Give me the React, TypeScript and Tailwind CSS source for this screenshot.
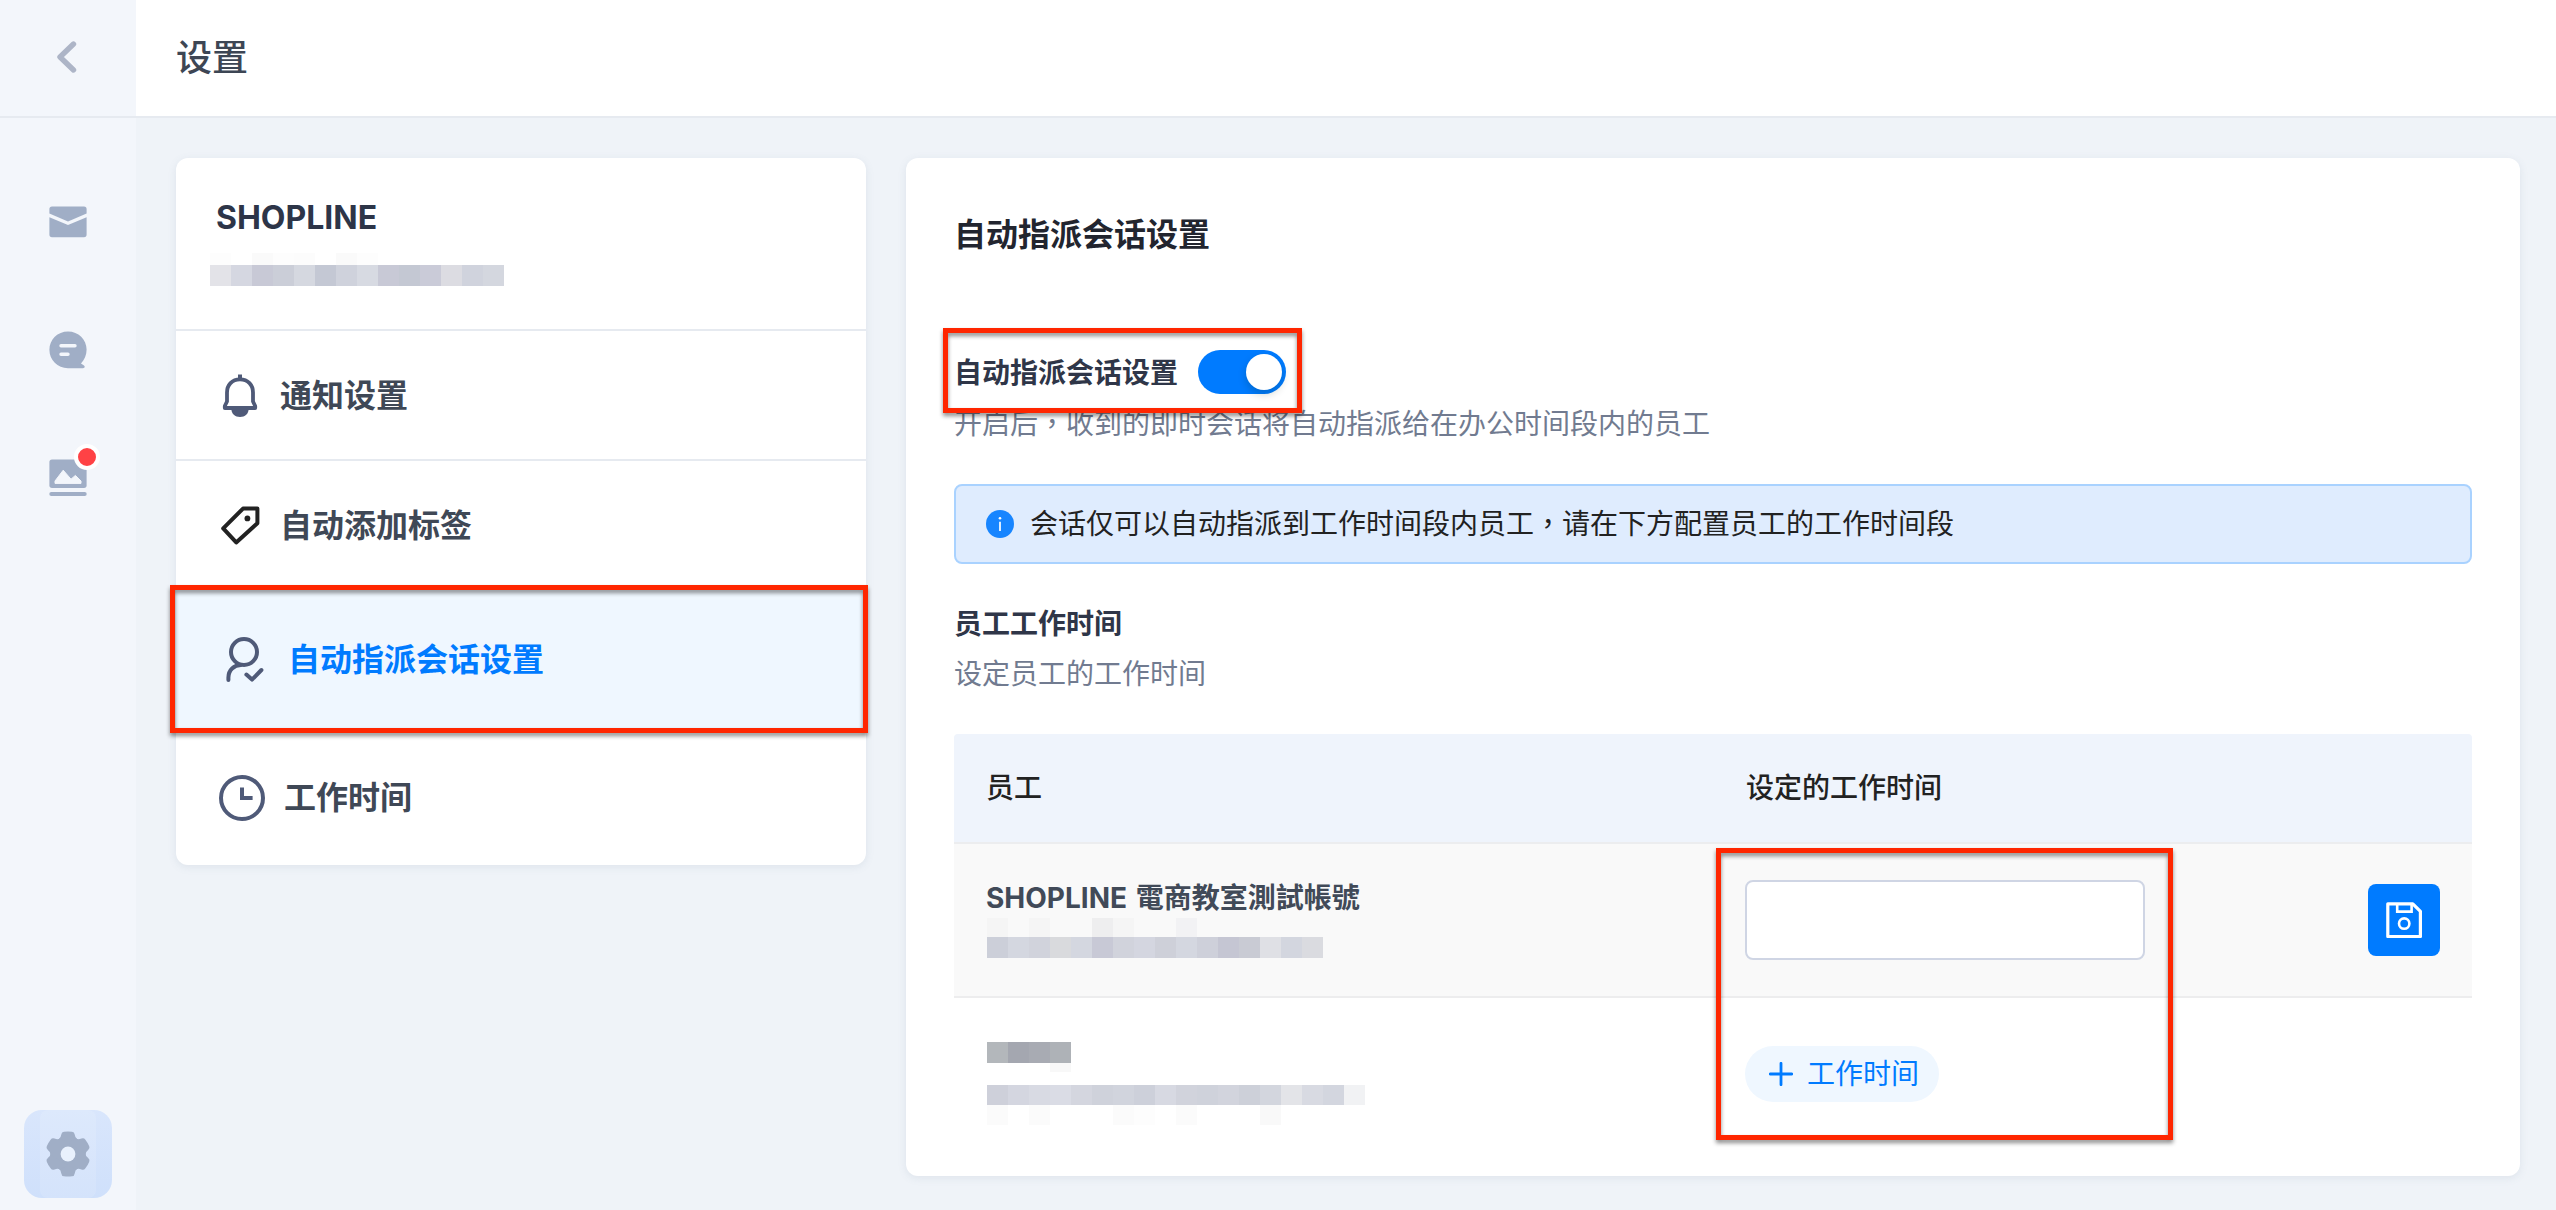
import type { ReactNode } from 'react';
import clsx from 'clsx';

interface MenuItem {
  key: string;
  label: string;
  icon: ReactNode;
  className: string;
}

// モザイク1行分のセル（空文字は透明）
interface MosaicRow {
  height: string;
  cells: string[];
}

const BackIcon = () => (
  <svg className="w-[20px] h-[32px]" viewBox="0 0 20 32" fill="none">
    <path d="M16.5 3L3 16L16.5 29" stroke="#adb5c7" strokeWidth="5.4" strokeLinecap="round" strokeLinejoin="round" />
  </svg>
);

const MailIcon = () => (
  <svg className="w-[38px] h-[32px]" viewBox="0 0 38 32" fill="#a0aec6">
    <path d="M3 0.5H35Q37.6 0.5 37.6 3V7.4L19 15.4L0.4 7.4V3Q0.4 0.5 3 0.5Z" />
    <path d="M0.4 11.2L19 19L37.6 11.2V28.5Q37.6 31.3 35 31.3H3Q0.4 31.3 0.4 28.5Z" />
  </svg>
);

const ChatIcon = () => (
  <svg className="w-[38px] h-[38px]" viewBox="0 0 38 38">
    <path
      d="M19 0.5C29.4 0.5 37.6 8.4 37.6 18.6C37.6 24.2 35.4 29 32 32.4L35 34.6C36.4 35.8 35.8 37.2 34 37.2H19C8.6 37.2 0.4 29 0.4 18.8C0.4 8.6 8.6 0.5 19 0.5Z"
      fill="#a0aec6"
    />
    <path d="M12 14.8H26M12 23.3H19" stroke="#f3f6fb" strokeWidth="3.4" strokeLinecap="round" />
  </svg>
);

const GalleryIcon = () => (
  <svg className="w-[38px] h-[38px]" viewBox="0 0 38 38">
    <rect x="0.4" y="0.5" width="37.2" height="28.4" rx="2.6" fill="#a0aec6" />
    <path d="M6 22L14.2 11.2L22 20.2L26.4 16.4L32 22V24.4H6Z" fill="#f3f6fb" stroke="#f3f6fb" strokeWidth="1" strokeLinejoin="round" />
    <path d="M2.4 35H35.6" stroke="#a0aec6" strokeWidth="4.2" strokeLinecap="round" />
  </svg>
);

const GearIcon = () => (
  <svg className="w-[46px] h-[46px]" viewBox="0 0 46 46">
    <g fill="#a0aec6">
      <circle cx="23" cy="23" r="17.2" />
      {[0, 60, 120].map((deg) => (
        <path
          key={deg}
          transform={`rotate(${deg} 23 23)`}
          d="M13.5 8.5Q16 7 16.3 3.6Q16.6 1 19 0.8Q23 0.2 27 0.8Q29.4 1 29.7 3.6Q30 7 32.5 8.5V37.5Q30 39 29.7 42.4Q29.4 45 27 45.2Q23 45.8 19 45.2Q16.6 45 16.3 42.4Q16 39 13.5 37.5Z"
        />
      ))}
    </g>
    <circle cx="23" cy="23" r="7.4" fill="#e9f1fd" />
  </svg>
);

const BellIcon = () => (
  <svg className="w-[36px] h-[44px]" viewBox="0 0 36 44" fill="none">
    <path d="M18 0.5V5" stroke="#4f5a78" strokeWidth="4" />
    <path
      d="M18 5.4C10 5.4 5 11 5 18.5V27.5L2.8 32V34H33.2V32L31 27.5V18.5C31 11 26 5.4 18 5.4Z"
      stroke="#4f5a78"
      strokeWidth="3.8"
      strokeLinejoin="round"
    />
    <path d="M9.4 35H26.6C26.6 39.8 23 43 18 43C13 43 9.4 39.8 9.4 35Z" fill="#4f5a78" />
  </svg>
);

const TagIcon = () => (
  <svg className="w-[40px] h-[40px]" viewBox="0 0 40 40" fill="none">
    <path d="M23 2.6H37.4V17.2L16.2 36.4L3.2 22.4Z" stroke="#222" strokeWidth="4" strokeLinejoin="round" />
    <circle cx="27.4" cy="12.4" r="2.9" fill="#222" />
  </svg>
);

const AgentIcon = () => (
  <svg className="w-[38px] h-[46px]" viewBox="0 0 38 46" fill="none" stroke="#4f5a78" strokeWidth="4" strokeLinecap="round" strokeLinejoin="round">
    <circle cx="18" cy="15" r="13" />
    <path d="M2.4 43V40.5C2.4 33 8 28 15 28" />
    <path d="M20.4 37.6L26 42.6L35.4 33" />
  </svg>
);

const ClockIcon = () => (
  <svg className="w-[46px] h-[46px]" viewBox="0 0 46 46" fill="none" stroke="#4f5a78">
    <circle cx="23" cy="23" r="21" strokeWidth="4" />
    <path d="M23 12.4V23H33.6" strokeWidth="4" />
  </svg>
);

const InfoIcon = () => (
  <svg className="w-[28px] h-[28px]" viewBox="0 0 28 28">
    <circle cx="14" cy="14" r="14" fill="#1785ff" />
    <circle cx="14" cy="8.2" r="1.3" fill="#fff" />
    <path d="M14 11.8V21" stroke="#fff" strokeWidth="1.7" />
  </svg>
);

const PlusIcon = () => (
  <svg className="w-[24px] h-[24px]" viewBox="0 0 24 24">
    <path d="M12 1.3V22.7M1.3 12H22.7" stroke="#007bff" strokeWidth="2.8" strokeLinecap="round" />
  </svg>
);

const SaveIcon = () => (
  <svg className="w-[36px] h-[36px]" viewBox="0 0 36 36" fill="none" stroke="#fff">
    <path d="M1.8 1.8H26.8L34.4 9.4V34.6H1.8Z" strokeWidth="3.2" strokeLinejoin="round" />
    <path d="M11.2 2V9.6H25.6V2" strokeWidth="2.6" />
    <circle cx="18.2" cy="21.6" r="5.2" strokeWidth="2.6" />
  </svg>
);

function Mosaic({ rows }: { rows: MosaicRow[] }) {
  return (
    <div className="flex flex-col">
      {rows.map((row, i) => (
        <div key={i} className={clsx('flex', row.height)}>
          {row.cells.map((color, j) => (
            <span key={j} className="w-[21px] h-full" style={{ backgroundColor: color || undefined }} />
          ))}
        </div>
      ))}
    </div>
  );
}

// 強調用の赤枠
function Highlight({ className }: { className: string }) {
  return (
    <div
      className={clsx(
        'absolute z-10 border-[5px] border-[#ff2600] drop-shadow-[0_3px_2px_rgba(0,0,0,0.45)] pointer-events-none',
        className
      )}
    />
  );
}

// 全角カンマは中央寄せの字形を使う
const Comma = () => <span className="leading-none font-['Noto_Sans_CJK_TC',sans-serif]">，</span>;

const menuItems: MenuItem[] = [
  { key: 'notice', label: '通知设置', icon: <BellIcon />, className: 'h-[130px] pt-[2px] pl-[46px] gap-[22px] border-b-2 border-[#e6eaf0]' },
  { key: 'tag', label: '自动添加标签', icon: <TagIcon />, className: 'h-[128px] pt-[2px] pl-[44px] gap-[20px]' },
  { key: 'assign', label: '自动指派会话设置', icon: <AgentIcon />, className: 'h-[142px] pl-[50px] gap-[24px]' },
  { key: 'hours', label: '工作时间', icon: <ClockIcon />, className: 'h-[134px] pl-[43px] gap-[19px]' },
];

const accountMosaic: MosaicRow[] = [
  { height: 'h-[12px]', cells: ['#fdfdfd', '', '#fafafa', '#fdfdfd', '#fcfcfc', '', '#fafafa', '#fdfdfd'] },
  {
    height: 'h-[21px]',
    cells: ['#e3e3e8', '#d5d7e1', '#c8c9d6', '#cbced8', '#d5d8e0', '#c4c8d4', '#cfd2dc', '#d7dae2', '#c8c9d6', '#c4c8d3', '#cacbd8', '#dcdce2', '#d0d3dd', '#d4d7df'],
  },
];

const staffMosaic: MosaicRow[] = [
  { height: 'h-[19px]', cells: ['#f5f5f5', '', '#f5f5f5', '', '', '#eeeeef', '#f5f5f5', '', '', '#f2f2f4'] },
  {
    height: 'h-[21px]',
    cells: ['#cccfd9', '#d4d7e0', '#d1d3dc', '#d9dadd', '#d4d7e0', '#c8c9d6', '#d1d3dc', '#d4d6e0', '#ced0d9', '#d4d7e0', '#ced0da', '#c5c6d3', '#c9cbd4', '#dfe0e5', '#d3d6df', '#dadbe0'],
  },
];

const nameMosaic: MosaicRow[] = [
  { height: 'h-[21px]', cells: ['#b3b7bb', '#a4a7b0', '#a8abb3', '#aeb2b7'] },
  { height: 'h-[9px]', cells: ['', '', '', '#f8f8f8'] },
];

const mailMosaic: MosaicRow[] = [
  {
    height: 'h-[20px]',
    cells: ['#ced0da', '#d4d6e0', '#d8dae3', '#dadce5', '#d4d6df', '#cfd2db', '#d1d4dd', '#cdd0da', '#d7d9e2', '#d1d3dc', '#cfd2db', '#d2d4dd', '#cdd0d9', '#d3d6de', '#e3e4e8', '#d8dae2', '#d3d6df', '#f1f2f4'],
  },
  { height: 'h-[20px]', cells: ['#fbfbfb', '', '#fbfbfb', '', '', '', '#fbfbfb', '#fdfdfd', '', '#fbfbfb', '', '', '', '#f9f9f9'] },
];

function SideNav() {
  return (
    <nav className="w-[136px] shrink-0 flex flex-col items-center bg-[#f3f6fb]">
      <div className="w-full h-[118px] pr-[2px] pb-[2px] flex items-center justify-center border-b-2 border-[#e6eaf0]">
        <BackIcon />
      </div>
      <div className="flex-1 flex flex-col items-center pt-[88px]">
        <MailIcon />
        <div className="pt-[93px]">
          <ChatIcon />
        </div>
        <div className="relative mt-[90px]">
          <GalleryIcon />
          <span className="absolute -top-[15px] -right-[13px] w-[26px] h-[26px] rounded-full border-4 border-white bg-[#ff4245]" />
        </div>
      </div>
      <div className="w-[88px] h-[88px] mb-3 px-4 rounded-[18px] bg-linear-to-b from-[#d9e6fc] to-[#cfe0fb]">
        <div className="h-full flex items-center justify-center rounded-lg bg-white/12">
          <GearIcon />
        </div>
      </div>
    </nav>
  );
}

function MenuCard() {
  return (
    <aside className="relative w-[690px] h-[707px] rounded-xl bg-white shadow-[0_2px_8px_rgba(100,120,150,0.12)]">
      <div className="h-[173px] border-b-2 border-[#e6eaf0]">
        <p className="pt-[40px] pl-[40px] text-[32px] leading-[40px] font-bold text-[#2d3548]">SHOPLINE</p>
        <div className="pl-[34px] pt-[15px]">
          <Mosaic rows={accountMosaic} />
        </div>
      </div>
      {menuItems.map((item) => (
        <div key={item.key} className={clsx('flex items-center', item.className, item.key === 'assign' && 'bg-[#eff7ff]')}>
          {item.icon}
          <span className={clsx('text-[32px] leading-[44px] font-bold', item.key === 'assign' ? 'text-[#007bff]' : 'text-[#3f4856]')}>
            {item.label}
          </span>
        </div>
      ))}
      <Highlight className="-left-[6px] top-[427px] w-[698px] h-[148px]" />
    </aside>
  );
}

function StaffTable() {
  return (
    <div className="relative mt-[40px] text-[28px] leading-[40px]">
      <div className="h-[110px] grid grid-cols-2 items-center rounded-t bg-[#eff4fc] border-b-2 border-[#ecedef] font-medium text-[#222]">
        <span className="pl-8">员工</span>
        <span className="pl-[33px]">设定的工作时间</span>
      </div>
      <div className="h-[154px] grid grid-cols-2 items-center bg-[#f9f9f9] border-b-2 border-[#ededee]">
        <div className="self-start pl-[33px] pt-[34px]">
          <p className="h-[40px] -ml-px font-bold text-[#414a58] [word-spacing:2px] font-['Inter','Noto_Sans_CJK_TC',sans-serif]">
            SHOPLINE 電商教室測試帳號
          </p>
          <Mosaic rows={staffMosaic} />
        </div>
        <div className="flex items-center justify-between pl-8 pr-8">
          <input className="w-[400px] h-[80px] rounded-lg border-2 border-[#cfd5e4] bg-white px-4 outline-none" />
          <button className="w-[72px] h-[72px] flex items-center justify-center rounded-lg bg-[#007bff]">
            <SaveIcon />
          </button>
        </div>
      </div>
      <div className="h-[152px] grid grid-cols-2 items-center">
        <div className="self-start pl-[33px] pt-[44px] flex flex-col gap-[13px]">
          <Mosaic rows={nameMosaic} />
          <Mosaic rows={mailMosaic} />
        </div>
        <div className="pl-8">
          <button className="w-[194px] h-[56px] flex items-center pl-[24px] gap-[14px] rounded-full bg-[#eff7ff] text-[#007bff]">
            <PlusIcon />
            工作时间
          </button>
        </div>
      </div>
      <Highlight className="left-[762px] top-[114px] w-[457px] h-[292px]" />
    </div>
  );
}

function AssignPanel() {
  return (
    <section className="w-[1614px] h-[1018px] px-[48px] pt-[55px] rounded-xl bg-white shadow-[0_2px_8px_rgba(100,120,150,0.12)]">
      <h2 className="text-[32px] leading-[44px] font-bold text-[#22252f]">自动指派会话设置</h2>

      <div className="relative mt-[93px] h-[44px] flex items-center gap-[20px]">
        <span className="pt-[2px] text-[28px] leading-[40px] font-bold text-[#2f3648]">自动指派会话设置</span>
        <button role="switch" aria-checked="true" className="w-[88px] h-[44px] p-[4px] flex justify-end rounded-full bg-[#007bff]">
          <span className="w-[36px] h-[36px] rounded-full bg-white shadow-[0_4px_8px_rgba(0,35,11,0.2)]" />
        </button>
        <Highlight className="-left-[11px] -top-[22px] w-[359px] h-[85px]" />
      </div>
      <p className="mt-[10px] h-[40px] text-[28px] leading-[40px] text-[#717b90]">
        开启后
        <Comma />
        收到的即时会话将自动指派给在办公时间段内的员工
      </p>

      <div className="mt-[40px] h-[80px] pl-[30px] flex items-center gap-[16px] rounded-lg border-2 border-[#a9d2ff] bg-[#dfecfe] text-[28px] leading-[40px] text-[#222]">
        <InfoIcon />
        <p className="h-[40px]">
          会话仅可以自动指派到工作时间段内员工
          <Comma />
          请在下方配置员工的工作时间段
        </p>
      </div>

      <h3 className="mt-[40px] text-[28px] leading-[40px] font-bold text-[#2f3648]">员工工作时间</h3>
      <p className="mt-[10px] text-[28px] leading-[40px] text-[#717b90]">设定员工的工作时间</p>
      <StaffTable />
    </section>
  );
}

export default function App() {
  return (
    <div className="w-[2556px] h-[1210px] flex overflow-hidden bg-[#eff3f8] font-['Inter','Noto_Sans_CJK_SC',sans-serif]">
      <SideNav />
      <div className="flex-1 flex flex-col">
        <header className="h-[118px] pl-[40px] flex items-center bg-white border-b-2 border-[#e6eaf0]">
          <h1 className="text-[36px] leading-[48px] text-[#3d4654] font-medium">设置</h1>
        </header>
        <main className="flex items-start gap-[40px] px-[40px] pt-[40px]">
          <MenuCard />
          <AssignPanel />
        </main>
      </div>
    </div>
  );
}
